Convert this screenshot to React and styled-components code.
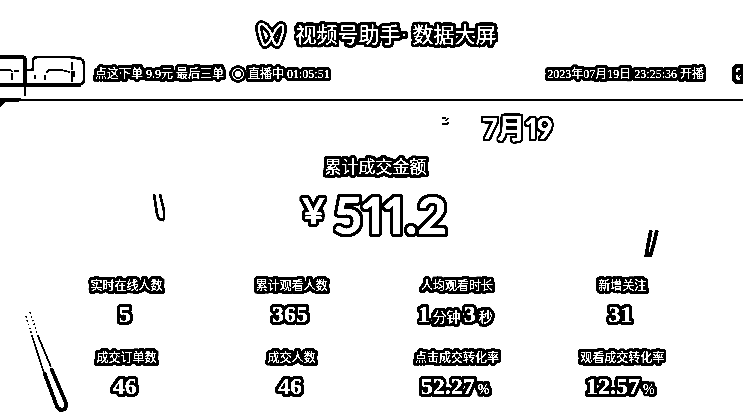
import React from 'react';
import styled, { createGlobalStyle, css } from 'styled-components';

const ringShadow = (radius) => {
  const parts = [];
  for (let x = -radius; x <= radius; x += 1) {
    for (let y = -radius; y <= radius; y += 1) {
      const d = x * x + y * y;
      if (d > 0 && d <= radius * radius + 4) parts.push(`${x}px ${y}px 0 #000`);
    }
  }
  return parts.join(', ');
};

const serif = '"Liberation Serif", "Noto Sans CJK SC", serif';
const sans = 'Lato, "Noto Sans CJK SC", sans-serif';

const GlobalStyle = createGlobalStyle`
  * { box-sizing: border-box; }
  body { margin: 0; background: #fff; }
`;

const outlined = css`
  color: #fff;
  text-shadow: ${ringShadow(3)};
`;

const Page = styled.main`
  position: relative;
  min-height: 100vh;
  overflow: hidden;
  background: #fff;
  color: #fff;
  font-family: ${serif};
  filter: brightness(1.4) contrast(8);
`;

const TitleBar = styled.header`
  display: flex;
  align-items: center;
  justify-content: center;
  gap: 8px;
  padding: 20px 0 5px 8px;
`;

const Title = styled.h1`
  ${outlined}
  margin: 0;
  display: flex;
  gap: 5px;
  font-size: 21px;
  line-height: 28px;
  font-weight: 400;
`;

const InfoBar = styled.div`
  display: flex;
  align-items: center;
  height: 46px;
  padding-bottom: 6px;
  border-bottom: 2px solid #000;
`;

const InfoText = styled.span`
  ${outlined}
  font-size: 12px;
  line-height: 16px;
  white-space: nowrap;
`;

const Live = styled.span`
  display: flex;
  align-items: center;
  gap: 1px;
  margin-left: 5px;
`;

const EndGroup = styled.div`
  display: flex;
  align-items: center;
  gap: 28px;
  margin-left: auto;
`;

const IconButton = styled.button`
  display: block;
  width: 11px;
  height: 20px;
  padding: 0;
  border: 0;
  background: none;
`;

const DateRow = styled.div`
  display: flex;
  justify-content: center;
  gap: 32px;
  padding: 11px 0 0 252px;
`;

const DateLabel = styled.time`
  color: #fff;
  text-shadow: ${ringShadow(2)};
  font-family: ${sans};
  font-variant-numeric: proportional-nums;
  font-weight: 700;
  font-size: 28px;
  line-height: 32px;
`;

const Total = styled.section`
  display: flex;
  flex-direction: column;
  align-items: center;
  padding-left: 8px;
`;

const TotalLabel = styled.h2`
  ${outlined}
  margin: 12px 0 6px;
  font-size: 17px;
  line-height: 24px;
  font-weight: 400;
`;

const TotalValue = styled.p`
  ${outlined}
  margin: 0;
  padding-right: 3px;
  display: flex;
  align-items: center;
  gap: 8px;
  font-family: ${sans};
  font-variant-numeric: proportional-nums;
  font-weight: 700;
  font-size: 52px;
  line-height: 56px;
`;

const Currency = styled.span`
  font-size: 36px;
  line-height: 40px;
  padding-bottom: 8px;
`;

const Stats = styled.dl`
  display: grid;
  grid-template-columns: repeat(4, 1fr);
  row-gap: 18px;
  margin: 0;
  padding: 34px 38px 0 44px;
`;

const Stat = styled.div`
  display: flex;
  flex-direction: column;
  align-items: center;
  gap: 6px;
`;

const StatLabel = styled.dt`
  ${outlined}
  font-size: 12px;
  line-height: 20px;
`;

const StatValue = styled.dd`
  ${outlined}
  margin: 0;
  padding-right: 4px;
  display: flex;
  align-items: baseline;
  gap: 3px;
  height: 28px;
  font-size: 24px;
  line-height: 24px;
  font-weight: 700;
`;

const Unit = styled.span`
  font-size: 14px;
  font-weight: 400;
`;

const Confetti = styled.svg`
  position: absolute;
  left: ${(p) => p.$left};
  top: ${(p) => p.$top};
`;

const CameraArt = styled.svg`
  align-self: flex-start;
  flex: none;
`;

const ButterflyLogo = () => (
  <svg width="33" height="30" viewBox="0 0 33 30" fill="none" strokeLinejoin="round" strokeLinecap="round" aria-hidden="true">
    {[['#000', 8], ['#fff', 2]].map(([color, width]) => (
      <path
        key={color}
        d="M16 13C13 8 9 4 6 4C3 5 4 12 6 18C8 24 9 26 11 25C14 24 18 15 21 9C23 6 25 4 27 5C30 7 28 13 26 18C24 24 23 26 21 25C19 23 17 18 16 13"
        stroke={color}
        strokeWidth={width}
      />
    ))}
  </svg>
);

const CameraStrip = () => (
  <CameraArt width="95" height="40" viewBox="0 2 95 40" overflow="visible" fill="none" stroke="#000" strokeWidth="2" aria-hidden="true">
    <path d="M0 4H22Q25 4 25 7V31" strokeWidth="4" />
    <path d="M25 17H34" strokeWidth="3" />
    <path d="M33 18V7Q34 4 38 4H70L82 6" strokeWidth="3" />
    <path d="M82 6Q84 8 84 12V28L81 32" strokeWidth="3" />
    <path d="M81 32H0" strokeWidth="4" />
    <path d="M0 17H10L13 19M12 20V27M14 18H19M35 22V26" />
    <path d="M45 27V22M46 20L49 17H61L70 19M72 9V17M72 18V29M74 18V24" />
    <path d="M25 31V43" strokeWidth="3" />
    <path d="M0 46H21M3 48H19" />
    <path d="M0 53V47H8L3 50Z" fill="#000" />
  </CameraArt>
);

const LiveIcon = () => (
  <svg width="18" height="18" viewBox="0 0 18 18" fill="none" aria-hidden="true">
    <circle cx="9" cy="9" r="9" fill="#000" />
    <circle cx="9" cy="9" r="5.5" stroke="#fff" strokeWidth="1" />
    <circle cx="9" cy="9" r="3" fill="#fff" />
  </svg>
);

const stats = [
  ['实时在线人数', ['5']],
  ['累计观看人数', ['365']],
  ['人均观看时长', ['1', '分钟', '3', '秒']],
  ['新增关注', ['31']],
  ['成交订单数', ['46']],
  ['成交人数', ['46']],
  ['点击成交转化率', ['52.27', '%']],
  ['观看成交转化率', ['12.57', '%']],
];

export default function App() {
  return (
    <Page>
      <GlobalStyle />
      <TitleBar>
        <ButterflyLogo />
        <Title>
          <span>视频号助手·</span>
          <span>数据大屏</span>
        </Title>
      </TitleBar>
      <InfoBar>
        <CameraStrip />
        <InfoText>点这下单 9.9元 最后三单</InfoText>
        <Live>
          <LiveIcon />
          <InfoText>直播中 01:05:51</InfoText>
        </Live>
        <EndGroup>
          <InfoText>2023年07月19日 23:25:36 开播</InfoText>
          <IconButton type="button" aria-label="全屏">
            <svg width="11" height="20" viewBox="0 0 11 20" fill="none" stroke="#fff">
              <path d="M3 0H11V20H3L0 17V3Z" fill="#000" stroke="none" />
              <path d="M5 8V5H8M5 11V15H8M5 15L9 11" />
            </svg>
          </IconButton>
        </EndGroup>
      </InfoBar>
      <DateRow>
        <svg width="8" height="16" viewBox="0 0 8 16" fill="none" stroke="#000" strokeWidth="2" aria-hidden="true">
          <path d="M0 6H4M3 9L7 6M0 12H5L7 10" />
        </svg>
        <DateLabel>7月19</DateLabel>
      </DateRow>
      <Total>
        <TotalLabel>累计成交金额</TotalLabel>
        <TotalValue>
          <Currency>¥</Currency>
          <span>511.2</span>
        </TotalValue>
      </Total>
      <Stats>
        {stats.map(([label, parts]) => (
          <Stat key={label}>
            <StatLabel>{label}</StatLabel>
            <StatValue>
              {parts.map((part, i) => (i % 2 ? <Unit key={part}>{part}</Unit> : <span key={part}>{part}</span>))}
            </StatValue>
          </Stat>
        ))}
      </Stats>
      <Confetti $left="152px" $top="193px" width="16" height="30" viewBox="0 0 16 30" fill="none" stroke="#000" strokeWidth="3" aria-hidden="true">
        <path d="M2 1L5 21L7 26L11 27L12 25V18L8 1" />
      </Confetti>
      <Confetti $left="644px" $top="229px" width="16" height="30" viewBox="0 0 16 30" fill="none" stroke="#000" strokeWidth="4" aria-hidden="true">
        <path d="M7 1L4 16L2 28M13 1L10 14L6 28" />
      </Confetti>
      <Confetti $left="24px" $top="310px" width="46" height="104" viewBox="0 0 46 104" fill="none" stroke="#000" aria-hidden="true">
        <path d="M2 6L8 26M6 2L14 26" strokeWidth="2" strokeDasharray="2 2" />
        <path d="M8 26L20 63M14 26L27 57" strokeWidth="2" />
        <path d="M20 62L32 94Q34 100 38 100Q43 99 42 93L27 58" strokeWidth="4" />
      </Confetti>
    </Page>
  );
}
